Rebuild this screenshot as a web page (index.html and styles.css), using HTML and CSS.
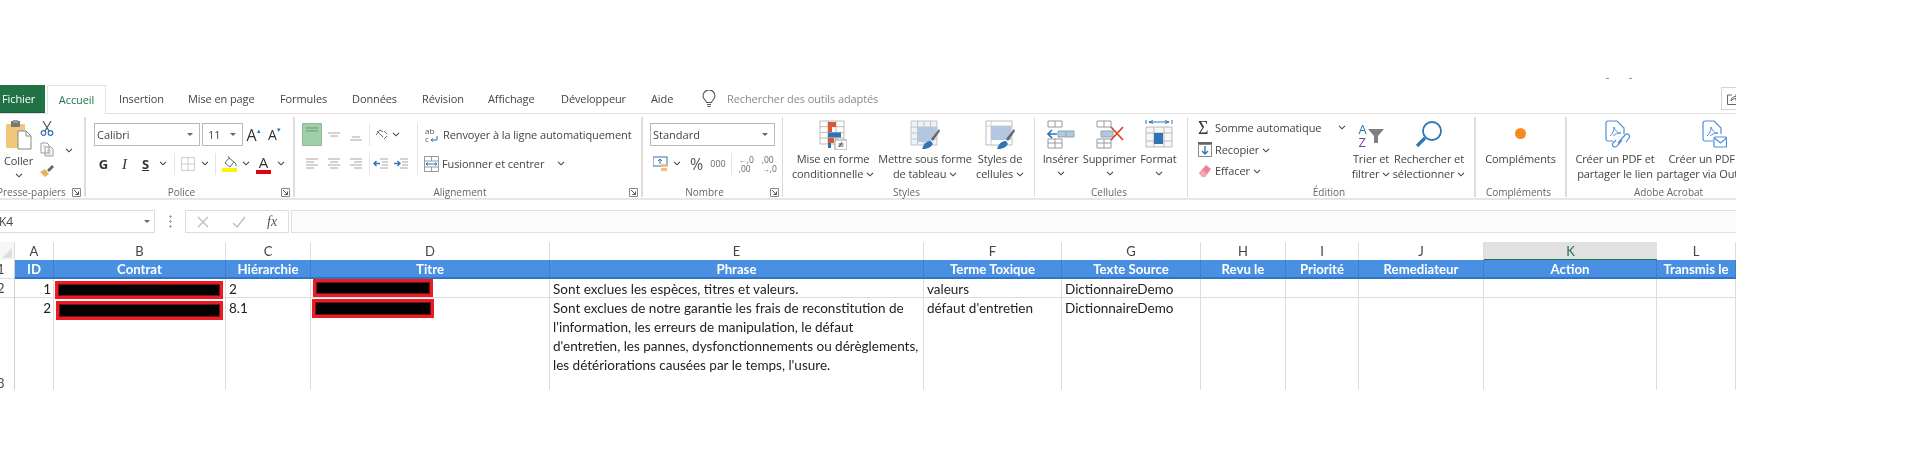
FILE: index.html
```html
<!DOCTYPE html>
<html lang="fr">

<head>
    <meta charset="UTF-8">
    <title>Excel - Accueil</title>
    <link rel="stylesheet" href="styles.css">
</head>

<body>
    <svg class="defs" width="0" height="0">
        <symbol id="chev" viewBox="0 0 8 5"><path d="M1 .8l3 3 3-3" fill="none" stroke="#444" stroke-width="1.1"/></symbol>
        <symbol id="launch" viewBox="0 0 9 9"><path d="M.5 8.5v-8h8v8z" fill="none" stroke="#888"/><path d="M2 2l4.500 4.500M6.500 3.500v3h-3" fill="none" stroke="#555"/></symbol>
        <symbol id="lines-l" viewBox="0 0 14 14"><path d="M1 2h12M1 5h8M1 8h12M1 11h8" stroke="#a6a6a6" stroke-width="1.2"/></symbol>
        <symbol id="lines-c" viewBox="0 0 14 14"><path d="M1 2h12M3 5h8M1 8h12M3 11h8" stroke="#a6a6a6" stroke-width="1.2"/></symbol>
        <symbol id="lines-r" viewBox="0 0 14 14"><path d="M1 2h12M5 5h8M1 8h12M5 11h8" stroke="#a6a6a6" stroke-width="1.2"/></symbol>
    </svg>

    <div class="top-dots"><i></i><i></i></div>

    <div class="tabs">
        <div class="tab-file">Fichier</div>
        <div class="tab tab-active">Accueil</div>
        <div class="tab tab-insertion">Insertion</div>
        <div class="tab tab-page">Mise en page</div>
        <div class="tab tab-formules">Formules</div>
        <div class="tab tab-donnees">Données</div>
        <div class="tab tab-revision">Révision</div>
        <div class="tab tab-affichage">Affichage</div>
        <div class="tab tab-dev">Développeur</div>
        <div class="tab tab-aide">Aide</div>
        <svg class="bulb" width="14" height="18" viewBox="0 0 14 18"><path d="M4.500 12.500C4 10 1 9 1 6a6 6 0 0 1 12 0c0 3-3 4-3.500 6.500zM5 14.500h4M5.500 16.500h3" fill="none" stroke="#555" stroke-width="1.100"/></svg>
        <div class="search-hint">Rechercher des outils adaptés</div>
        <div class="share">
            <svg width="14" height="14" viewBox="0 0 14 14"><path d="M6 3H1.500v9.500H11V8M5 9c0-3 2-4.500 5-4.500V2l3.500 3.500L10 9V6.500C8 6.500 6 7 5 9z" fill="none" stroke="#666"/></svg>
        </div>
    </div>

    <div class="ribbon">
        <section class="group group-clip">
            <div class="group-body clip-body">
                <div class="paste">
                    <svg width="27" height="30" viewBox="0 0 27 30">
                        <rect x="1" y="4" width="19" height="24" rx="1" fill="#f1c77c"/>
                        <rect x="6" y="1" width="9" height="6" fill="#777"/>
                        <rect x="8" y="0" width="5" height="3" fill="#999"/>
                        <path d="M13 11h8l5 5v13H13z" fill="#fff" stroke="#888"/>
                        <path d="M21 11v5h5" fill="none" stroke="#888"/>
                    </svg>
                    <span class="paste-label">Coller</span>
                    <svg class="chev-s" width="8" height="5"><use href="#chev"/></svg>
                </div>
                <div class="clip-tools">
                    <svg width="14" height="16" viewBox="0 0 14 16"><path d="M3 1l6 10M11 1L5 11" stroke="#555" stroke-width="1.200"/><circle cx="3.500" cy="13" r="2.300" fill="none" stroke="#2f75b5" stroke-width="1.200"/><circle cx="10.500" cy="13" r="2.300" fill="none" stroke="#2f75b5" stroke-width="1.200"/></svg>
                    <svg width="14" height="15" viewBox="0 0 14 15"><path d="M1 1h6l2 2v8H1zM5 5h6l2 2v7H5z" fill="#fff" stroke="#999"/><path d="M7 8h4M7 10h4M7 12h4M3 4h2" stroke="#bbb"/></svg>
                    <svg width="16" height="15" viewBox="0 0 16 15"><path d="M1 9l5-3 4 5-4 3z" fill="#e8b25e"/><path d="M8 7l5-5 2 2-5 5z" fill="#666"/></svg>
                </div>
                <svg class="clip-chev" width="8" height="5"><use href="#chev"/></svg>
            </div>
            <div class="group-label label-clip">Presse-papiers</div>
            <svg class="launch" width="9" height="9"><use href="#launch"/></svg>
        </section>

        <section class="group group-font">
            <div class="group-body rows">
                <div class="row font-row-1">
                    <div class="combo combo-font"><span>Calibri</span><b class="caret"></b></div>
                    <div class="combo combo-size"><span>11</span><b class="caret"></b></div>
                    <div class="tb tb-grow">A<sup>▴</sup></div>
                    <div class="tb tb-shrink">A<sup>▾</sup></div>
                </div>
                <div class="row font-row-2">
                    <div class="tb tb-g">G</div>
                    <div class="tb tb-i">I</div>
                    <div class="tb tb-s">S</div>
                    <div class="tb-chev"><svg width="8" height="5"><use href="#chev"/></svg></div>
                    <i class="sep sep-font-1"></i>
                    <div class="tb-wide">
                        <svg width="14" height="14" viewBox="0 0 14 14"><path d="M.5.5h13v13H.5zM7 .5v13M.5 7h13" fill="none" stroke="#ccc"/></svg>
                    </div>
                    <div class="tb-chev"><svg width="8" height="5"><use href="#chev"/></svg></div>
                    <i class="sep sep-font-2"></i>
                    <div class="tb-wide">
                        <svg width="15" height="17" viewBox="0 0 15 17"><path d="M3 8l4-5 5 4-4 5z" fill="#fff" stroke="#666"/><path d="M6 1l2 3M12 7l2 2v2" stroke="#2f75b5" fill="none"/><rect y="13" width="15" height="4" fill="#fff200"/></svg>
                    </div>
                    <div class="tb-chev"><svg width="8" height="5"><use href="#chev"/></svg></div>
                    <div class="tb tb-color">A</div>
                    <div class="tb-chev"><svg width="8" height="5"><use href="#chev"/></svg></div>
                </div>
            </div>
            <div class="group-label label-launch">Police</div>
            <svg class="launch" width="9" height="9"><use href="#launch"/></svg>
        </section>

        <section class="group group-align">
            <div class="group-body rows">
                <div class="row align-row-1">
                    <div class="align-on"><svg width="14" height="8" viewBox="0 0 14 8"><path d="M1 1h12M1 4h12" stroke="#6f8f78" stroke-width="1.200"/></svg></div>
                    <div class="align-btn"><svg width="14" height="8" viewBox="0 0 14 8"><path d="M1 2h12M3 5h8" stroke="#a6a6a6" stroke-width="1.200"/></svg></div>
                    <div class="align-btn align-low"><svg width="14" height="8" viewBox="0 0 14 8"><path d="M3 3h8M1 6h12" stroke="#a6a6a6" stroke-width="1.200"/></svg></div>
                    <i class="sep sep-align-1"></i>
                    <div class="align-orient"><svg width="14" height="14" viewBox="0 0 14 14"><path d="M2 3l6 6M1 7l4-5 3 2M9 11l3-3" fill="none" stroke="#666"/><path d="M9 3l3 3" stroke="#b04a8a"/></svg></div>
                    <div class="tb-chev-n"><svg width="8" height="5"><use href="#chev"/></svg></div>
                    <i class="sep sep-align-2"></i>
                    <div class="wrap-icon">
                        <span class="wrap-ab">ab</span>
                        <span class="wrap-c">c<svg width="8" height="6" viewBox="0 0 8 6"><path d="M1 4h6V0M1 4l2-1.500M1 4l2 1.500" fill="none" stroke="#2f75b5"/></svg></span>
                    </div>
                    <span class="rb-text">Renvoyer à la ligne automatiquement</span>
                </div>
                <div class="row align-row-2">
                    <div class="align-btn"><svg width="14" height="14"><use href="#lines-l"/></svg></div>
                    <div class="align-btn"><svg width="14" height="14"><use href="#lines-c"/></svg></div>
                    <div class="align-btn"><svg width="14" height="14"><use href="#lines-r"/></svg></div>
                    <i class="sep sep-align-1"></i>
                    <div class="indent"><svg width="15" height="14" viewBox="0 0 15 14"><path d="M7 2h8M9 5h6M9 8h6M7 11h8" stroke="#a6a6a6"/><path d="M1 6.500h6M3.500 4L1 6.500 3.500 9" fill="none" stroke="#2f75b5" stroke-width="1.400"/></svg></div>
                    <div class="indent"><svg width="15" height="14" viewBox="0 0 15 14"><path d="M7 2h8M9 5h6M9 8h6M7 11h8" stroke="#a6a6a6"/><path d="M1 6.500h6M4.500 4L7 6.500 4.500 9" fill="none" stroke="#2f75b5" stroke-width="1.400"/></svg></div>
                    <i class="sep sep-align-3"></i>
                    <svg class="merge-icon" width="15" height="16" viewBox="0 0 15 16"><path d="M.5.500h14v15H.5zM.5 5h14M.5 11h14M7.500.5V5M7.500 11v4.500" fill="none" stroke="#999"/><path d="M2 8h11M4 6.500L2 8l2 1.500M11 6.500L13 8l-2 1.500" fill="none" stroke="#2f75b5"/></svg>
                    <span class="rb-text">Fusionner et centrer</span>
                    <svg class="merge-chev" width="8" height="5"><use href="#chev"/></svg>
                </div>
            </div>
            <div class="group-label label-launch">Alignement</div>
            <svg class="launch" width="9" height="9"><use href="#launch"/></svg>
        </section>

        <section class="group group-number">
            <div class="group-body rows">
                <div class="row number-row-1">
                    <div class="combo combo-number"><span>Standard</span><b class="caret"></b></div>
                </div>
                <div class="row number-row-2">
                    <svg width="15" height="15" viewBox="0 0 15 15"><rect y="1" width="14" height="9" fill="#fff" stroke="#2f75b5"/><path d="M7 3v5M5 5l2-2 2 2" fill="none" stroke="#2f75b5"/><rect x="8" y="8" width="6" height="3" fill="#eec27d"/><rect x="8" y="12" width="6" height="3" fill="#eec27d"/></svg>
                    <svg class="num-chev" width="8" height="5"><use href="#chev"/></svg>
                    <span class="num-pct">%</span>
                    <span class="num-000">000</span>
                    <i class="sep sep-number"></i>
                    <div class="num-dec"><b class="dec-arrow">←</b>,0<br>,00</div>
                    <div class="num-dec num-dec-2"><span>,00</span><br><b class="dec-arrow">→</b>,0</div>
                </div>
            </div>
            <div class="group-label label-launch">Nombre</div>
            <svg class="launch" width="9" height="9"><use href="#launch"/></svg>
        </section>

        <section class="group group-styles">
            <div class="group-body big-row">
                <div class="big big-cond">
                    <div class="big-icon">
                        <svg width="28" height="30" viewBox="0 0 28 30">
                            <path d="M1 1h24v23H1zM9 1v23M17 1v23M1 6.700h24M1 12.400h24M1 18h24" fill="#fff" stroke="#bbb"/>
                            <rect x="9" y="2" width="8" height="5" fill="#d9573a"/>
                            <rect x="9" y="7" width="4" height="5" fill="#d9573a"/>
                            <rect x="9" y="12.500" width="13" height="5" fill="#2f75b5"/>
                            <rect x="9" y="18" width="6" height="5" fill="#d9573a"/>
                            <rect x="9" y="23" width="3" height="5" fill="#2f75b5"/>
                            <rect x="16" y="20" width="12" height="10" fill="#fff" stroke="#999"/>
                            <path d="M20 27l3-5M19.500 24h5M19.500 26h5" stroke="#555" fill="none"/>
                        </svg>
                    </div>
                    <span>Mise en forme</span>
                    <span>conditionnelle <svg width="8" height="5"><use href="#chev"/></svg></span>
                </div>
                <div class="big big-table">
                    <div class="big-icon">
                        <svg width="30" height="30" viewBox="0 0 30 30">
                            <path d="M1 1h26v24H1zM7.500 1v24M14 1v24M20.500 1v24M1 7h26M1 13h26M1 19h26" fill="#eef3f9" stroke="#c4c4c4"/>
                            <path d="M7.500 7H27v7l-8 8H7.500z" fill="#b4c7e0"/>
                            <path d="M21 19l8-10 1 2-7 10z" fill="#666"/>
                            <path d="M12 29c2-6 5-8 9-8l2 3c-2 3-5 5-11 5z" fill="#2f75b5"/>
                        </svg>
                    </div>
                    <span>Mettre sous forme</span>
                    <span>de tableau <svg width="8" height="5"><use href="#chev"/></svg></span>
                </div>
                <div class="big big-cell">
                    <div class="big-icon">
                        <svg width="30" height="30" viewBox="0 0 30 30">
                            <path d="M1 1h26v24H1z" fill="#fff" stroke="#bbb"/>
                            <path d="M1 6h26M6 1v24" stroke="#ccc"/>
                            <rect x="6" y="6" width="20" height="14" fill="#b4c7e0"/>
                            <path d="M21 19l8-10 1 2-7 10z" fill="#666"/>
                            <path d="M12 29c2-6 5-8 9-8l2 3c-2 3-5 5-11 5z" fill="#2f75b5"/>
                        </svg>
                    </div>
                    <span>Styles de</span>
                    <span>cellules <svg width="8" height="5"><use href="#chev"/></svg></span>
                </div>
            </div>
            <div class="group-label">Styles</div>
        </section>

        <section class="group group-cells">
            <div class="group-body big-row">
                <div class="big big-insert">
                    <div class="big-icon">
                        <svg width="28" height="30" viewBox="0 0 28 30">
                            <path d="M1 1h14v6H1zM8 1v6M1 19h14v9H1zM8 19v9M1 23h14" fill="#fff" stroke="#999"/>
                            <path d="M11 11h16v6H11zM19 11v6" fill="#b4c7e0" stroke="#8aa"/>
                            <path d="M1 14h9M5 10l-4 4 4 4" fill="none" stroke="#2f75b5" stroke-width="1.600"/>
                        </svg>
                    </div>
                    <span>Insérer</span>
                    <svg class="chev-s" width="8" height="5"><use href="#chev"/></svg>
                </div>
                <div class="big big-delete">
                    <div class="big-icon">
                        <svg width="28" height="30" viewBox="0 0 28 30">
                            <path d="M1 1h14v6H1zM8 1v6M1 19h14v9H1zM8 19v9M1 23h14" fill="#fff" stroke="#999"/>
                            <path d="M5 11h12v6H5z" fill="#b4c7e0" stroke="#8aa"/>
                            <path d="M15 7l12 13M27 7L15 20" stroke="#d9472b" stroke-width="1.800"/>
                        </svg>
                    </div>
                    <span>Supprimer</span>
                    <svg class="chev-s" width="8" height="5"><use href="#chev"/></svg>
                </div>
                <div class="big big-format">
                    <div class="big-icon">
                        <svg width="28" height="30" viewBox="0 0 28 30">
                            <path d="M1 0v4M27 0v4M4 2h20M8 .5L4 2l4 1.500M20 .5L24 2l-4 1.500" fill="none" stroke="#2f75b5"/>
                            <path d="M1 7h26v20H1zM9 7v20M19 7v20M1 13h26M1 21h26" fill="#f7f7f7" stroke="#bbb"/>
                            <rect x="9" y="13" width="9" height="11" fill="#2f75b5"/>
                        </svg>
                    </div>
                    <span>Format</span>
                    <svg class="chev-s" width="8" height="5"><use href="#chev"/></svg>
                </div>
            </div>
            <div class="group-label">Cellules</div>
        </section>

        <section class="group group-edit">
            <div class="group-body edit-body">
                <div class="edit-list">
                    <div class="edit-line">
                        <span class="sigma">Σ</span>
                        <span class="rb-text">Somme automatique</span>
                        <svg class="sum-chev" width="8" height="5"><use href="#chev"/></svg>
                    </div>
                    <div class="edit-line">
                        <svg width="14" height="15" viewBox="0 0 14 15"><path d="M.5 2.500h13v12H.5z" fill="#fff" stroke="#888"/><rect width="14" height="2" fill="#666"/><path d="M7 4v8M4 9l3 3 3-3" fill="none" stroke="#2f75b5" stroke-width="1.400"/></svg>
                        <span class="rb-text">Recopier <svg width="8" height="5"><use href="#chev"/></svg></span>
                    </div>
                    <div class="edit-line">
                        <svg width="14" height="14" viewBox="0 0 14 14"><path d="M1 9l7-8 5 4-6 8H4z" fill="#ee7f96"/><path d="M1 9l3 4h3l2-3-4-4z" fill="#f3a7b6"/></svg>
                        <span class="rb-text">Effacer <svg width="8" height="5"><use href="#chev"/></svg></span>
                    </div>
                </div>
                <div class="big big-sort">
                    <div class="big-icon sort-icon">
                        <div class="az-stack"><b class="az-a">A</b><b class="az-z">Z</b></div>
                        <svg width="16" height="14" viewBox="0 0 16 14"><path d="M0 0h16l-6 7v7H6V7z" fill="#808080"/></svg>
                    </div>
                    <span>Trier et</span>
                    <span>filtrer <svg width="8" height="5"><use href="#chev"/></svg></span>
                </div>
                <div class="big big-find">
                    <div class="big-icon">
                        <svg width="28" height="28" viewBox="0 0 28 28"><circle cx="17" cy="11" r="9" fill="none" stroke="#2f75b5" stroke-width="1.800"/><path d="M10 18l-8 8" stroke="#2f75b5" stroke-width="3.200"/></svg>
                    </div>
                    <span>Rechercher et</span>
                    <span>sélectionner <svg width="8" height="5"><use href="#chev"/></svg></span>
                </div>
            </div>
            <div class="group-label">Édition</div>
        </section>

        <section class="group group-addins">
            <div class="group-body big-row">
                <div class="big big-addin">
                    <div class="big-icon"><i class="addin-dot"></i></div>
                    <span>Compléments</span>
                </div>
            </div>
            <div class="group-label">Compléments</div>
        </section>

        <section class="group group-adobe">
            <div class="group-body big-row">
                <div class="big big-pdf">
                    <div class="big-icon">
                        <svg width="25" height="28" viewBox="0 0 25 28">
                            <path d="M8 21H3a2 2 0 0 1-2-2V3a2 2 0 0 1 2-2h9l7 7v6" fill="none" stroke="#4d8fdc" stroke-width="1.200"/>
                            <path d="M5 16c3-2 4-6 4-9 1 3 3 6 7 6-3 0-6 1-8 3" fill="none" stroke="#4d8fdc"/>
                            <path d="M13 23l7-8a2.500 2.500 0 0 1 4 3l-3 4M17 20l-5 6a2.500 2.500 0 0 1-4-3l3-3" fill="none" stroke="#4d8fdc" stroke-width="1.200"/>
                        </svg>
                    </div>
                    <span>Créer un PDF et</span>
                    <span>partager le lien</span>
                </div>
                <div class="big big-mail">
                    <div class="big-icon">
                        <svg width="25" height="28" viewBox="0 0 25 28">
                            <path d="M11 21H3a2 2 0 0 1-2-2V3a2 2 0 0 1 2-2h9l7 7v6" fill="none" stroke="#4d8fdc" stroke-width="1.200"/>
                            <path d="M5 16c3-2 4-6 4-9 1 3 3 6 7 6-3 0-6 1-8 3" fill="none" stroke="#4d8fdc"/>
                            <rect x="12" y="17" width="12.500" height="10" rx="1" fill="#fff" stroke="#4d8fdc" stroke-width="1.200"/>
                            <path d="M12.500 18l6 5 6-5" fill="none" stroke="#4d8fdc" stroke-width="1.200"/>
                        </svg>
                    </div>
                    <span>Créer un PDF et</span>
                    <span>partager via Outlook</span>
                </div>
            </div>
            <div class="group-label label-adobe">Adobe Acrobat</div>
        </section>
    </div>

    <div class="formula-bar">
        <div class="name-box"><span>K4</span><b class="caret"></b></div>
        <div class="fx-dots"></div>
        <div class="fx-box">
            <svg width="12" height="12" viewBox="0 0 12 12"><path d="M1 1l10 10M11 1L1 11" stroke="#bdbdbd" stroke-width="1.300"/></svg>
            <svg width="14" height="12" viewBox="0 0 14 12"><path d="M1 7l4 4 8-10" fill="none" stroke="#bdbdbd" stroke-width="1.400"/></svg>
            <span class="fx-text">fx</span>
        </div>
        <div class="fx-input"></div>
    </div>

    <div class="sheet">
        <div class="corner"><i></i></div>
        <div class="col-head">A</div>
        <div class="col-head">B</div>
        <div class="col-head">C</div>
        <div class="col-head">D</div>
        <div class="col-head">E</div>
        <div class="col-head">F</div>
        <div class="col-head">G</div>
        <div class="col-head">H</div>
        <div class="col-head">I</div>
        <div class="col-head">J</div>
        <div class="col-head col-selected">K</div>
        <div class="col-head">L</div>

        <div class="row-head">1</div>
        <div class="th">ID</div>
        <div class="th">Contrat</div>
        <div class="th">Hiérarchie</div>
        <div class="th">Titre</div>
        <div class="th">Phrase</div>
        <div class="th">Terme Toxique</div>
        <div class="th">Texte Source</div>
        <div class="th">Revu le</div>
        <div class="th">Priorité</div>
        <div class="th">Remediateur</div>
        <div class="th">Action</div>
        <div class="th">Transmis le</div>

        <div class="row-head">2</div>
        <div class="td td-num">1</div>
        <div class="td td-bar"><div class="redact redact-b1"></div></div>
        <div class="td">2</div>
        <div class="td td-bar"><div class="redact redact-d1"></div></div>
        <div class="td">Sont exclues les espèces, titres et valeurs.</div>
        <div class="td">valeurs</div>
        <div class="td">DictionnaireDemo</div>
        <div class="td"></div>
        <div class="td"></div>
        <div class="td"></div>
        <div class="td"></div>
        <div class="td"></div>

        <div class="row-head row-head-low">3</div>
        <div class="td td-num">2</div>
        <div class="td td-bar"><div class="redact redact-b2"></div></div>
        <div class="td">8.1</div>
        <div class="td td-bar"><div class="redact redact-d2"></div></div>
        <div class="td">Sont exclues de notre garantie les frais de reconstitution de<br>l'information, les erreurs de manipulation, le défaut<br>d'entretien, les pannes, dysfonctionnements ou dérèglements,<br>les détériorations causées par le temps, l'usure.</div>
        <div class="td">défaut d'entretien</div>
        <div class="td">DictionnaireDemo</div>
        <div class="td"></div>
        <div class="td"></div>
        <div class="td"></div>
        <div class="td"></div>
        <div class="td"></div>
    </div>
</body>

</html>
```

FILE: styles.css
```css
html,
body {
    margin: 0;
    padding: 0;
    background: #fff;
}

body {
    position: relative;
    width: 1736px;
    height: 468px;
    overflow: hidden;
    padding-top: 85px;
    box-sizing: border-box;
    font-family: "Open Sans", "Noto Sans", sans-serif;
    font-size: 11px;
    color: #444;
    filter: blur(.35px);
}

.defs {
    position: absolute;
}

.top-dots {
    position: absolute;
    top: 78px;
    left: 1606px;
    display: flex;
    gap: 20px;
}

.top-dots i {
    width: 3px;
    height: 1px;
    background: #999;
}

/* tabs */
.tabs {
    display: flex;
    align-items: stretch;
    height: 28px;
    line-height: 27px;
    font-size: 11px;
    letter-spacing: -.1px;
    position: relative;
}

.tab-file {
    width: 45px;
    background: #217346;
    color: #fff;
    text-indent: 2px;
    border-bottom: 1px solid #1a5c38;
    box-sizing: border-box;
}

.tab {
    position: absolute;
    top: 0;
    color: #444;
}

.tab-active {
    left: 47px;
    width: 59px;
    height: 29px;
    box-sizing: border-box;
    text-align: center;
    color: #217346;
    background: #fff;
    border: 1px solid #e1e1e1;
    border-bottom: none;
    z-index: 1;
}

.tab-insertion { left: 119px; }
.tab-page { left: 188px; }
.tab-formules { left: 280px; }
.tab-donnees { left: 352px; }
.tab-revision { left: 422px; }
.tab-affichage { left: 488px; }
.tab-dev { left: 561px; }
.tab-aide { left: 651px; }

.bulb {
    position: absolute;
    left: 702px;
    top: 5px;
}

.search-hint {
    position: absolute;
    left: 727px;
    color: #8a8a8a;
}

.share {
    position: absolute;
    left: 1721px;
    top: 2px;
    width: 30px;
    height: 23px;
    box-sizing: border-box;
    border: 1px solid #d4d4d4;
    padding: 4px 0 0 4px;
    line-height: 0;
}

/* ribbon */
.ribbon {
    display: flex;
    height: 87px;
    box-sizing: border-box;
    padding-top: 3px;
    border-top: 1px solid #e1e1e1;
    border-bottom: 2px solid #e6e6e6;
}

.group {
    position: relative;
    display: flex;
    flex-direction: column;
    height: 80px;
    box-sizing: border-box;
    border-right: 2px solid #dcdcdc;
    flex: none;
}

.group-clip { width: 86px; }
.group-font { width: 209px; }
.group-align { width: 348px; }
.group-number { width: 140px; border-right-width: 1px; }
.group-styles { width: 252px; border-right-width: 1px; }
.group-cells { width: 153px; border-right-width: 1px; }
.group-edit { width: 288px; }
.group-addins { width: 91px; }
.group-adobe { width: 169px; border-right: none; overflow: hidden; }

.group-body {
    height: 69px;
    flex: none;
}

.group-label {
    text-align: center;
    font-size: 10px;
    line-height: 12px;
    color: #666;
    padding-right: 4px;
    white-space: nowrap;
}

.label-launch {
    padding-right: 16px;
}

.label-adobe {
    padding: 0 0 0 34px;
}

.label-clip {
    text-align: left;
    margin-left: -3px;
    padding-right: 0;
}

.launch {
    position: absolute;
    right: 3px;
    bottom: 0;
}

.rows {
    display: flex;
    flex-direction: column;
    padding-top: 6px;
    box-sizing: border-box;
    gap: 6px;
}

.row {
    display: flex;
    align-items: center;
    height: 23px;
    flex: none;
}

.sep {
    display: block;
    width: 1px;
    height: 22px;
    background: #e4e4e4;
    flex: none;
}

.rb-text {
    white-space: nowrap;
    font-size: 11px;
    letter-spacing: -.1px;
}

/* clipboard */
.clip-body {
    display: flex;
    position: relative;
}

.paste {
    width: 37px;
    display: flex;
    flex-direction: column;
    align-items: center;
    padding-top: 3px;
    box-sizing: border-box;
}

.paste-label {
    line-height: 15px;
    margin-top: 3px;
    font-size: 11px;
    letter-spacing: -.1px;
}

.chev-s {
    margin-top: 5px;
}

.clip-tools {
    display: flex;
    flex-direction: column;
    align-items: center;
    gap: 6px;
    padding-top: 3px;
    margin-left: 2px;
    width: 16px;
}

.clip-chev {
    margin: 31px 0 0 10px;
}

/* font */
.font-row-1 { padding-left: 8px; }
.font-row-2 { padding-left: 7px; }

.combo {
    display: flex;
    align-items: center;
    justify-content: space-between;
    height: 23px;
    box-sizing: border-box;
    border: 1px solid #b9b9b9;
    padding: 0 6px 0 2px;
    font-size: 11px;
    flex: none;
}

.combo-font { width: 106px; }
.combo-size { width: 41px; margin-left: 2px; padding-left: 5px; }
.combo-number { width: 125px; margin-left: 7px; }

.caret {
    display: block;
    width: 0;
    height: 0;
    border-left: 3px solid transparent;
    border-right: 3px solid transparent;
    border-top: 3px solid #666;
}

.tb {
    width: 21px;
    flex: none;
    text-align: center;
    line-height: 20px;
    font-size: 15px;
    color: #333;
}

.tb sup {
    font-size: 7px;
    color: #2f75b5;
    vertical-align: 8px;
    line-height: 0;
}

.tb-grow { font-size: 16px; }
.tb-shrink { font-size: 14px; }
.tb-g { font-weight: 700; font-size: 13px; }
.tb-i { font-style: italic; font-family: "Liberation Serif", serif; font-size: 15px; }
.tb-s { font-weight: 700; font-size: 13px; text-decoration: underline; }

.tb-color {
    font-size: 15px;
    line-height: 17px;
    height: 20px;
    box-sizing: border-box;
    background: linear-gradient(#e3000f, #e3000f) center bottom / 15px 4px no-repeat;
}

.tb-chev,
.tb-chev-n {
    width: 14px;
    display: flex;
    justify-content: center;
    flex: none;
}

.tb-chev-n { width: 8px; }
.tb-wide { width: 20px; display: flex; justify-content: center; flex: none; }
.sep-font-1 { margin: 0 3px 0 4px; }
.sep-font-2 { margin: 0 3px 0 3px; }

/* alignment */
.align-row-1 { padding-left: 7px; }
.align-row-2 { padding-left: 6px; }

.align-on {
    width: 20px;
    height: 23px;
    flex: none;
    background: #9fcfa9;
    border: 1px solid #8cbf98;
    box-sizing: border-box;
    display: flex;
    justify-content: center;
    padding-top: 3px;
}

.align-btn {
    width: 22px;
    flex: none;
    display: flex;
    justify-content: center;
}

.align-low { padding-top: 7px; }
.align-row-1 .align-btn:nth-child(2) { margin-left: 1px; }
.align-orient { width: 21px; margin-left: 1px; display: flex; justify-content: center; flex: none; }
.sep-align-1 { margin-left: 2px; }
.sep-align-2 { margin-left: 17px; height: 38px; align-self: flex-start; }
.sep-align-3 { margin-left: 7px; }
.merge-icon { margin: 0 3px 0 6px; flex: none; }
.merge-chev { margin-left: 13px; }
.indent { width: 20px; display: flex; justify-content: center; flex: none; }

.wrap-icon {
    width: 14px;
    margin: 0 4px 0 7px;
    flex: none;
    font-size: 8px;
    line-height: 8px;
    color: #555;
}

.wrap-ab,
.wrap-c {
    display: block;
}

.wrap-c svg {
    margin-left: 1px;
}

/* number */
.number-row-2 {
    padding-left: 10px;
}

.num-chev { margin-left: 5px; flex: none; }
.num-pct { margin-left: 9px; font-size: 16px; color: #555; }
.num-000 { margin-left: 7px; font-size: 9px; color: #666; }
.sep-number { margin-left: 5px; }
.num-dec {
    margin-left: 7px;
    font-size: 8.5px;
    line-height: 9px;
    color: #666;
    white-space: nowrap;
}
.num-dec-2 { margin-left: 8px; }

.dec-arrow {
    color: #2f75b5;
    font-size: 8px;
}

/* big buttons */
.big-row {
    display: flex;
}

.big {
    display: flex;
    flex-direction: column;
    align-items: center;
    font-size: 11px;
    letter-spacing: -.1px;
    line-height: 15px;
    white-space: nowrap;
    flex: none;
}

.big-icon {
    height: 34px;
    padding-top: 3px;
    box-sizing: border-box;
    flex: none;
}

.big-icon svg {
    display: block;
}

.big span svg {
    vertical-align: 1px;
}

.big .chev-s {
    margin-top: 5px;
}

.big-cond { width: 100px; }
.big-table { width: 84px; }
.big-cell { width: 66px; }
.group-cells .big { width: 49px; }
.big-insert { margin-left: 1px; }
.edit-body { display: flex; }

.edit-list {
    width: 163px;
    padding-left: 10px;
    box-sizing: border-box;
}

.edit-line {
    display: flex;
    align-items: center;
    height: 21.500px;
    gap: 3px;
}

.edit-line > svg {
    flex: none;
}

.edit-line .rb-text svg {
    vertical-align: 1px;
}

.sigma {
    width: 14px;
    font-size: 18px;
    line-height: 20px;
    font-family: "Liberation Serif", serif;
    color: #333;
}

.sum-chev { margin-left: 14px; }
.big-sort { width: 40px; }
.big-find { width: 76px; }

.sort-icon {
    display: flex;
    align-items: center;
    gap: 1px;
}

.az-stack {
    display: flex;
    flex-direction: column;
    font-size: 13px;
    font-weight: 400;
    line-height: 13px;
}

.az-a,
.az-z {
    font-weight: 400;
}

.az-a { color: #2f75b5; }
.az-z { color: #7a3fa8; }

.big-addin { width: 89px; }

.addin-dot {
    display: block;
    width: 11px;
    height: 11px;
    margin-top: 8px;
    border-radius: 50%;
    background: #f58a1f;
}

.big-pdf { width: 96px; }
.big-mail { width: 100px; margin-left: -5px; }
.big-pdf .big-icon { padding-left: 4px; }
.big-mail .big-icon { padding-left: 12px; }

/* formula bar */
.formula-bar {
    display: flex;
    height: 23px;
    margin-top: 10px;
    align-items: stretch;
}

.name-box {
    width: 155px;
    box-sizing: border-box;
    border: 1px solid #dcdcdc;
    border-left: none;
    display: flex;
    align-items: center;
    justify-content: space-between;
    padding-right: 4px;
    font-size: 12px;
}

.name-box span {
    margin-left: -1px;
}

.fx-dots {
    width: 30px;
    background: radial-gradient(circle, #aaa 1px, transparent 1.300px) center / 3px 5px repeat-y;
    background-size: 3px 5px;
    background-position: 14px 4px;
    background-clip: content-box;
    padding: 4px 0;
    box-sizing: border-box;
}

.fx-box {
    width: 104px;
    box-sizing: border-box;
    border: 1px solid #dcdcdc;
    display: flex;
    align-items: center;
    padding-left: 11px;
    gap: 23px;
}

.fx-text {
    font-family: "Liberation Serif", serif;
    font-style: italic;
    font-size: 14px;
    color: #555;
    margin-left: -2px;
}

.fx-input {
    flex: 1;
    margin-left: 2px;
    border: 1px solid #e0e0e0;
    border-right: none;
    background: #fcfcfc;
}

/* sheet */
.sheet {
    display: grid;
    grid-template-columns: 15px 39px 172px 85px 239px 374px 138px 139px 85px 73px 125px 173px 79px;
    grid-template-rows: 18px 19px 19px 92px;
    margin-top: 9px;
    font-family: "Lato", "Open Sans", sans-serif;
    font-size: 13.500px;
    color: #222;
}

.corner {
    background: #f6f6f6;
    border-right: 1px solid #dcdcdc;
    box-sizing: border-box;
    position: relative;
}

.corner i {
    position: absolute;
    right: 2px;
    bottom: 2px;
    border-left: 10px solid transparent;
    border-bottom: 10px solid #dedede;
}

.col-head {
    text-align: center;
    line-height: 18px;
    font-size: 13px;
    color: #444;
    border-right: 1px solid #dcdcdc;
    box-sizing: border-box;
}

.col-selected {
    background: #e1e1e1;
    color: #217346;
    border-bottom: 1px solid #217346;
    border-right: none;
}

.row-head {
    text-align: left;
    text-indent: -3px;
    line-height: 18px;
    font-size: 13px;
    color: #444;
    border-right: 1px solid #cfcfcf;
    border-bottom: 1px solid #dcdcdc;
    box-sizing: border-box;
    overflow: hidden;
}

.row-head-low {
    display: flex;
    align-items: flex-end;
    line-height: 14px;
    border-bottom: none;
}

.th {
    background: #4a90e2;
    color: #fff;
    font-weight: 700;
    font-size: 13.200px;
    text-align: center;
    line-height: 19px;
    border-right: 1px solid #3f7ec8;
    border-bottom: 2px solid #2e75c6;
    box-sizing: border-box;
    white-space: nowrap;
}

.td {
    line-height: 19px;
    padding: 1px 0 0 3px;
    border-right: 1px solid #dcdcdc;
    border-bottom: 1px solid #dcdcdc;
    box-sizing: border-box;
    white-space: nowrap;
    overflow: visible;
}

.sheet > .td:nth-last-child(-n+12) {
    border-bottom: none;
}

.td-num {
    text-align: right;
    padding: 1px 2px 0 0;
}

.td-bar {
    padding: 0;
}

.redact {
    box-sizing: border-box;
    background: #000;
    border: 3px solid #ed1c24;
    box-shadow: inset 0 0 0 1px #7d0f14;
}

.redact-b1 { width: 168px; height: 18px; margin: 2px 0 0 1px; }
.redact-b2 { width: 167px; height: 19px; margin: 3px 0 0 2px; }
.redact-d1 { width: 120px; height: 18px; margin: 0 0 0 2px; }
.redact-d2 { width: 122px; height: 19px; margin: 1px 0 0 1px; }
```
